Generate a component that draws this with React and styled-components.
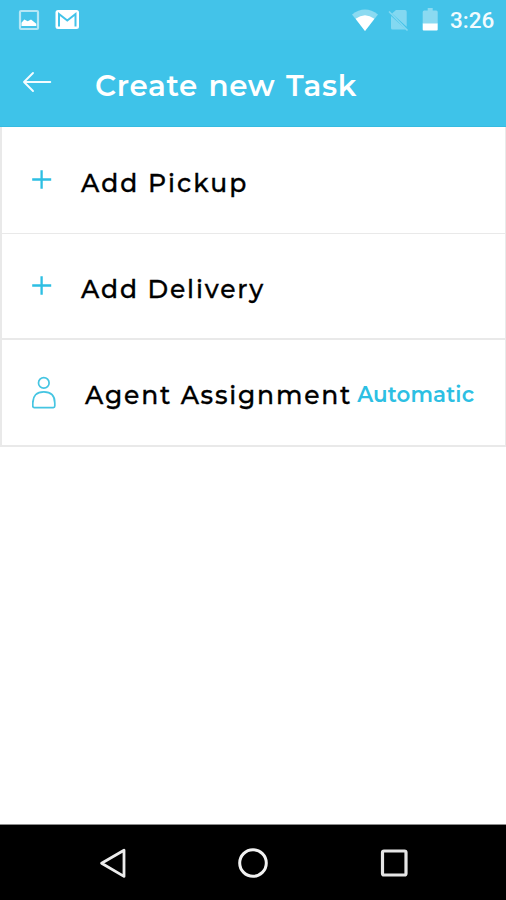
import React from 'react'
import styled, { createGlobalStyle } from 'styled-components'

const GlobalStyle = createGlobalStyle`
  * {
    box-sizing: border-box;
  }

  body {
    margin: 0;
    background: #fff;
    font-family: Montserrat, Inter, 'Open Sans', sans-serif;
  }
`

const Screen = styled.div`
  display: flex;
  flex-direction: column;
  width: 506px;
  height: 900px;
  overflow: hidden;
  background: #fff;
`

// Android status bar
const StatusBar = styled.div`
  display: flex;
  align-items: center;
  justify-content: space-between;
  height: 40px;
  padding: 0 12px 0 18px;
  background: #43c3e9;
`

const StatusGroup = styled.div`
  display: flex;
  align-items: center;
  gap: ${p => p.$gap}px;

  svg {
    display: block;
  }
`

const Clock = styled.span`
  width: 44px;
  font: 500 22.5px/40px Roboto, sans-serif;
  color: #f2fbfe;
  white-space: nowrap;
`

// App header
const Header = styled.header`
  display: flex;
  align-items: center;
  height: 87px;
  padding-left: 22px;
  background: #3ec3e9;
  border-bottom: 1px solid #36bbe1;
`

const BackIcon = styled.svg`
  flex: none;
  margin-bottom: 3px;
`

const Title = styled.h1`
  margin: 5px 0 0 43px;
  font-size: 29.3px;
  font-weight: 600;
  line-height: 36px;
  letter-spacing: 0.7px;
  word-spacing: 1.7px;
  color: #fff;
  white-space: nowrap;
`

// Task options
const List = styled.main`
  flex: 1;
`

const Row = styled.div`
  display: flex;
  align-items: center;
  height: ${p => p.$height}px;
  padding-left: 30px;
  border: solid #e9e9e9;
  border-width: 0 1px ${p => p.$line}px 2px;
`

const RowIcon = styled.svg`
  flex: none;
`

const Label = styled.span`
  margin: ${p => p.$top}px 0 0 29px;
  font-size: 25px;
  font-weight: 500;
  line-height: 32px;
  letter-spacing: ${p => p.$spacing}px;
  color: #000;
  -webkit-text-stroke: 0.3px #000;
  white-space: nowrap;
`

const Value = styled.span`
  margin: 3px 0 0 5px;
  font-size: 21.4px;
  font-weight: 600;
  line-height: 28px;
  letter-spacing: 0.1px;
  color: #2dbfe3;
  white-space: nowrap;
`

// Android navigation keys
const NavBar = styled.nav`
  display: flex;
  align-items: center;
  gap: 110px;
  height: 76px;
  padding-left: 98px;
  border-top: 1px solid #8c8c8c;
  background: #000;
`

const PlusIcon = () => (
  <RowIcon width="20" height="30" viewBox="0 0 20 30" fill="none" stroke="#2dbfe3" strokeWidth="2.3">
    <path d="M0.2 14.5h19M9.6 5.2v18.6" />
  </RowIcon>
)

const PersonIcon = () => (
  <RowIcon width="24" height="38" viewBox="0 0 24 38" fill="none" stroke="#45c5e2" strokeWidth="1.7">
    <circle cx="11.8" cy="8.9" r="5.3" />
    <path d="M2.3 33.6h19q1.5 0 1.5-1.5v-3.2c0-7-3.7-11-11-11s-11 4-11 11v3.2q0 1.5 1.5 1.5z" />
  </RowIcon>
)

const App = () => (
  <Screen>
    <GlobalStyle />
    <StatusBar>
      <StatusGroup $gap={15}>
        <svg width="22" height="22" viewBox="0 0 22 22">
          <rect x="2" y="2" width="18" height="18" rx="1" fill="none" stroke="#b4e7f6" strokeWidth="2.2" />
          <path d="M3.5 17v-3.2l2.8-3.3 3.4 1.7 3.3-1.6 2.5 1.8 2.8 2.4V17z" fill="#fff" />
        </svg>
        <svg width="25" height="22" viewBox="0 0 25 22">
          <rect x="0.5" y="1" width="23.5" height="19" rx="2.5" fill="#fff" />
          <path d="M4 17.5V5l8.3 6.5L20.5 5v12.5" fill="none" stroke="#43c3e9" strokeWidth="2" />
        </svg>
      </StatusGroup>
      <StatusGroup $gap={10}>
        <svg width="26" height="24" viewBox="0 0 26 24">
          <path d="M0 6.5q13-10 26 0L13 23z" fill="#8bdaf1" />
          <path d="M3.6 10.8q9.4-7 18.8 0L13 23z" fill="#fff" />
        </svg>
        <svg width="21" height="24" viewBox="0 0 21 24">
          <path d="M3 8l15 13.5H4.5Q3 21.5 3 20zM8 2h9q1.7 0 1.7 1.7v15L4 5.5z" fill="#83d8f1" />
          <path d="M1 3.5l18.5 19" stroke="#83d8f1" strokeWidth="1.6" />
        </svg>
        <StatusGroup $gap={9}>
          <svg width="22" height="26" viewBox="-1.2 0 22 26">
            <path d="M4 3.5h3.5V1h5v2.5H16q1.5 0 1.5 1.5v12h-15V5q0-1.5 1.5-1.5z" fill="#8bdaf1" />
            <path d="M2.5 16.5h15v6q0 1-1 1h-13q-1 0-1-1z" fill="#fff" />
          </svg>
          <Clock>3:26</Clock>
        </StatusGroup>
      </StatusGroup>
    </StatusBar>
    <Header>
      <BackIcon width="30" height="22" viewBox="0 0 30 22" fill="none" stroke="#f4fcff" strokeWidth="1.9" strokeLinecap="round" strokeLinejoin="round">
        <path d="M28.3 11H2M11 2L2 11l9 9" />
      </BackIcon>
      <Title>Create new Task</Title>
    </Header>
    <List>
      <Row $height={107} $line={1}>
        <PlusIcon />
        <Label $top={5} $spacing={2}>Add Pickup</Label>
      </Row>
      <Row $height={106} $line={2}>
        <PlusIcon />
        <Label $top={6} $spacing={1.85}>Add Delivery</Label>
      </Row>
      <Row $height={107} $line={2}>
        <PersonIcon />
        <Label $top={4} $spacing={1.8}>Agent Assignment</Label>
        <Value>Automatic</Value>
      </Row>
    </List>
    <NavBar>
      <svg width="30" height="32" viewBox="0 0 30 32" fill="none" stroke="#ececec" strokeWidth="2.8" strokeLinejoin="round">
        <path d="M26 3.2v26.2L3.6 16.2z" />
      </svg>
      <svg width="32" height="32" viewBox="0 0 32 32" fill="none" stroke="#f2f2f2" strokeWidth="3">
        <circle cx="15" cy="16" r="13.3" />
      </svg>
      <svg width="30" height="32" viewBox="0 0 30 32" fill="none" stroke="#e6e6e6" strokeWidth="3.2">
        <rect x="2.5" y="4" width="23.5" height="24" rx="1.5" />
      </svg>
    </NavBar>
  </Screen>
)

export default App
